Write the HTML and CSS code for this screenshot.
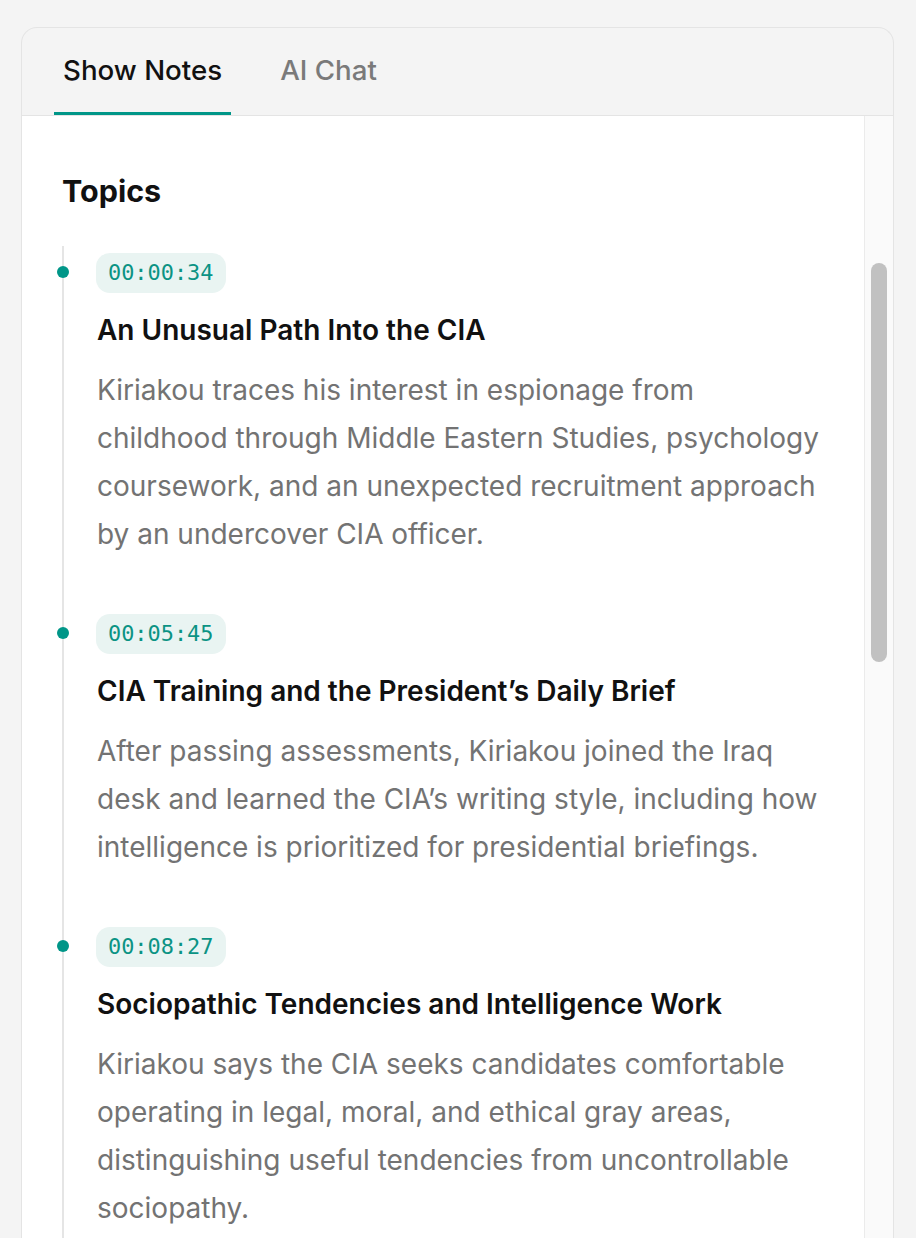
FILE: index.html
```html
<!DOCTYPE html>
<html lang="en">
<head>
<meta charset="utf-8">
<title>Show Notes</title>
<link rel="stylesheet" href="styles.css">
</head>
<body>
<div class="card">
  <div class="tabs">
    <div class="tab active">Show Notes</div>
    <div class="tab">AI Chat</div>
  </div>
  <div class="body">
    <div class="content">
      <h2 class="heading">Topics</h2>
      <ul class="timeline">
        <li class="item">
          <span class="dot"></span>
          <span class="stamp">00:00:34</span>
          <h3 class="title">An Unusual Path Into the CIA</h3>
          <p class="desc">Kiriakou traces his interest in espionage from childhood through Middle Eastern Studies, psychology coursework, and an unexpected recruitment approach by an undercover CIA officer.</p>
        </li>
        <li class="item">
          <span class="dot"></span>
          <span class="stamp">00:05:45</span>
          <h3 class="title">CIA Training and the President’s Daily Brief</h3>
          <p class="desc">After passing assessments, Kiriakou joined the Iraq desk and learned the CIA’s writing style, including how intelligence is prioritized for presidential briefings.</p>
        </li>
        <li class="item">
          <span class="dot"></span>
          <span class="stamp">00:08:27</span>
          <h3 class="title">Sociopathic Tendencies and Intelligence Work</h3>
          <p class="desc">Kiriakou says the CIA seeks candidates comfortable operating in legal, moral, and ethical gray areas, distinguishing useful tendencies from uncontrollable sociopathy.</p>
        </li>
      </ul>
    </div>
    <div class="track"><div class="thumb"></div></div>
  </div>
</div>
</body>
</html>
```
FILE: styles.css
```css
html, body {
  margin: 0;
  padding: 0;
  height: 100%;
  overflow: hidden;
}
body {
  background: #f4f4f4;
  font-family: Inter, "Noto Sans", sans-serif;
  padding: 27px 22px 0 21px;
  box-sizing: border-box;
}
.card {
  border: 1px solid #e4e4e4;
  border-bottom: none;
  border-radius: 16px 16px 0 0;
  background: #f4f4f4;
  overflow: hidden;
  height: 1300px;
  display: flex;
  flex-direction: column;
}
.tabs {
  height: 87px;
  display: flex;
  gap: 40px;
  padding-left: 32px;
  border-bottom: 1px solid #e4e4e4;
  flex: none;
}
.tab {
  padding: 0 9px;
  display: flex;
  align-items: center;
  font-size: 27.7px;
  font-weight: 500;
  color: #7a7a7a;
  border-bottom: 3px solid transparent;
}
.tab.active {
  color: #111;
  border-bottom-color: #009688;
}
.body {
  flex: 1;
  display: flex;
  min-height: 0;
}
.content {
  flex: 1;
  background: #fff;
  padding: 0 41px 0 40px;
}
.track {
  width: 28px;
  flex: none;
  background: #fafafa;
  border-left: 1px solid #ebebeb;
  display: flex;
  justify-content: center;
  align-items: flex-start;
}
.thumb {
  width: 16px;
  height: 399px;
  margin-top: 147px;
  border-radius: 8px;
  background: #c1c1c1;
}
.heading {
  margin: 55px 0 0 0;
  font-size: 30.5px;
  line-height: 40px;
  font-weight: 700;
  color: #111;
}
.timeline {
  list-style: none;
  margin: 35px 0 0 0;
  padding: 7px 0 0 0;
  border-left: 2px solid #e5e5e5;
}
.item {
  position: relative;
  padding-left: 33px;
  padding-bottom: 56px;
}
.dot {
  position: absolute;
  left: -7px;
  top: 13px;
  width: 12px;
  height: 12px;
  border-radius: 50%;
  background: #009688;
}
.stamp {
  display: inline-block;
  height: 40px;
  line-height: 40px;
  padding: 0 13px 0 12px;
  margin-left: -1px;
  border-radius: 14px;
  background: #e9f4f2;
  color: #0b9384;
  font-family: "DejaVu Sans Mono", "Liberation Mono", monospace;
  font-size: 21.9px;
}
.title {
  margin: 19px 0 0 0;
  font-size: 28px;
  line-height: 36px;
  font-weight: 600;
  color: #111;
}
.desc {
  margin: 18px 0 0 0;
  font-size: 28px;
  line-height: 48px;
  color: #737373;
}
```
